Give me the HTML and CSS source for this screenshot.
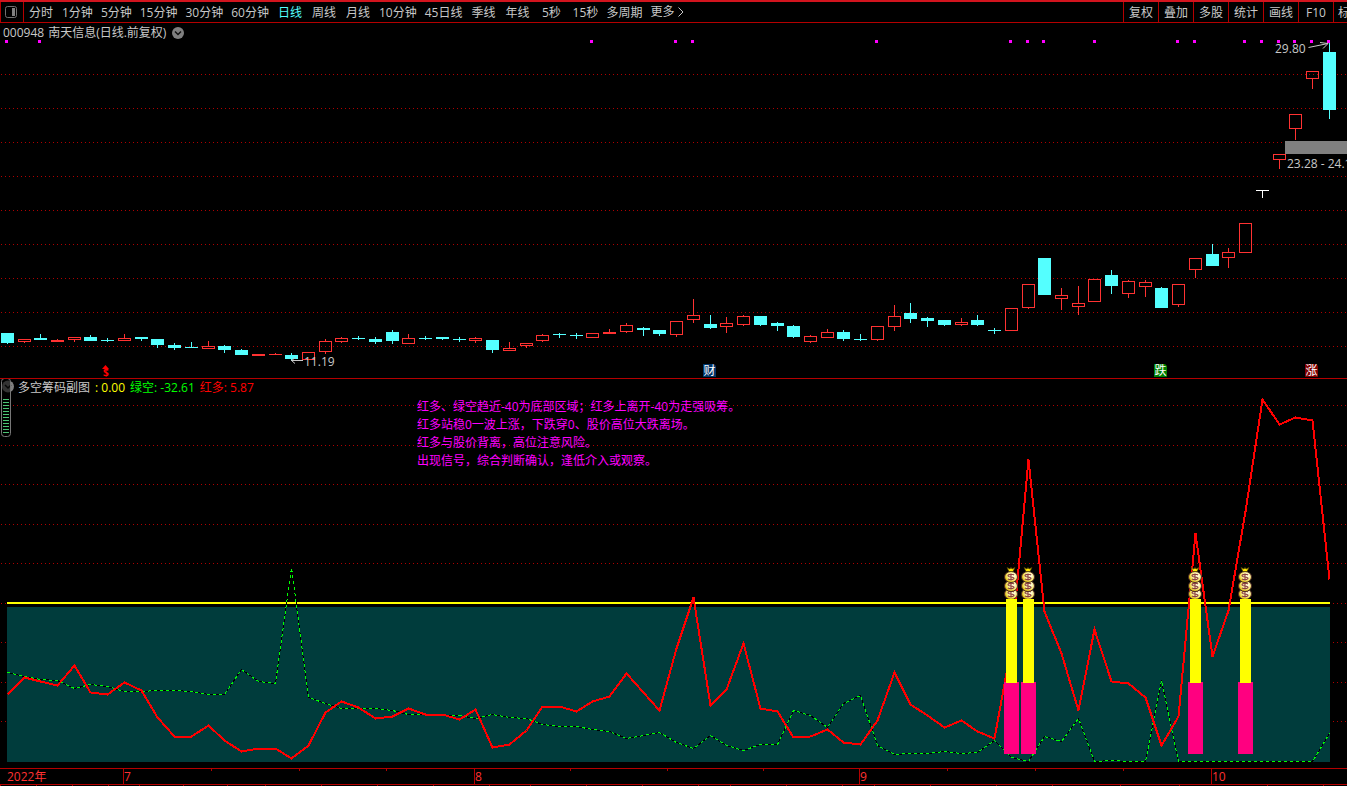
FILE: index.html
```html
<!DOCTYPE html>
<html lang="zh-CN">
<head>
<meta charset="utf-8">
<title>000948 南天信息</title>
<link rel="stylesheet" href="styles.css">
</head>
<body>
<nav class="toolbar">
  <button class="layout-btn" type="button" aria-label="布局">
    <svg width="12" height="12" viewBox="0 0 12 12"><rect class="icon-frame" x="0.5" y="0.5" width="11" height="11" rx="2"/><rect class="icon-fill" x="7" y="2" width="3" height="8"/></svg>
  </button>
  <div class="periods">
    <button type="button">分时</button><button type="button">1分钟</button><button type="button">5分钟</button><button type="button">15分钟</button><button type="button">30分钟</button><button type="button">60分钟</button><button type="button" class="active">日线</button><button type="button">周线</button><button type="button">月线</button><button type="button">10分钟</button><button type="button">45日线</button><button type="button">季线</button><button type="button">年线</button><button type="button">5秒</button><button type="button">15秒</button><button type="button">多周期</button><button type="button" class="more">更多<svg width="6" height="10" viewBox="0 0 6 10"><path class="chevron" d="M0.5 0.5L5 5L0.5 9.5"/></svg></button>
  </div>
  <div class="tools">
    <button type="button">复权</button><button type="button">叠加</button><button type="button">多股</button><button type="button">统计</button><button type="button">画线</button><button type="button">F10</button><button type="button" class="clipped">标</button>
  </div>
</nav>

<main>
  <section class="panel">
    <header class="panel-title">
      <span>000948</span>
      <span>南天信息(日线.前复权)</span>
      <svg class="drop" width="12" height="12" viewBox="0 0 12 12"><circle cx="6" cy="6" r="6" fill="#808080"/><path d="M3 4.5L6 7.5L9 4.5" fill="none" stroke="#111" stroke-width="1.5"/></svg>
    </header>
    <svg class="chart" height="355">
      <g transform="translate(0 -23)">
        <g id="price-grid" class="grid"></g>
        <g id="signals" class="signals"></g>
        <g id="candles" class="crisp"></g>
        <rect x="1285" y="141" width="100%" height="13" fill="#808080"/>
        <text class="label" x="1287" y="168">23.28 - 24.11</text>
        <text class="label" x="1275" y="53">29.80</text>
        <path class="pointer" d="M1308.500 47.500L1328 43.500M1320 42.500L1328 43.500L1323 48.500"/>
        <text class="label" x="304" y="366">11.19</text>
        <path class="pointer" d="M303 360.500H291.500M295.500 357.500L291.500 360.500L295 363.500"/>
        <path d="M105.500 365L109 369H102Z" fill="#f00"/>
        <text class="dollar" x="103" y="376">$</text>
        <g class="badge">
          <path d="M703 364H714L716 366V377H703Z" fill="#003468"/><text x="703.500" y="375">财</text>
          <path d="M1154 364H1165L1167 366V377H1154Z" fill="#008000"/><text x="1154.500" y="375">跌</text>
          <path d="M1305 364H1316L1318 366V377H1305Z" fill="#800000"/><text x="1305.500" y="375">涨</text>
        </g>
      </g>
    </svg>
  </section>

  <section class="panel">
    <header class="panel-title sub-title">
      <span class="name">多空筹码副图</span>
      <span class="yellow">: 0.00</span>
      <span class="green">绿空: -32.61</span>
      <span class="red">红多: 5.87</span>
    </header>
    <div class="notes">
      <p>红多、绿空趋近-40为底部区域；红多上离开-40为走强吸筹。</p>
      <p>红多站稳0一波上涨，下跌穿0、股价高位大跌离场。</p>
      <p>红多与股价背离，高位注意风险。</p>
      <p>出现信号，综合判断确认，逢低介入或观察。</p>
    </div>
    <svg class="chart" height="389">
      <defs>
        <radialGradient id="gold" cx="0.6" cy="0.4" r="0.6"><stop offset="0.3" stop-color="#fffbd0"/><stop offset="0.7" stop-color="#f4e468"/><stop offset="1" stop-color="#d8b800"/></radialGradient>
        <g id="coin"><ellipse rx="6.500" ry="5.500" fill="url(#gold)" stroke="#4c2828" stroke-width="1"/><path d="M3 -2C2 -3 -3 -3 -3 -1.300C-3 0.400 3 -0.400 3 1.300C3 3 -2 3 -3 1.800M0 -3.500V3.500" fill="none" stroke="#8c4040" stroke-width="1.100"/></g>
        <g id="bags"><use href="#coin" y="594"/><use href="#coin" y="586"/><use href="#coin" y="577"/><path d="M-4 567.500L-1 569L0 567.500L1 569L4 567.500L2 571.500H-2Z" fill="#ffe800" stroke="#4c3c00" stroke-width="0.700"/></g>
      </defs>
      <g transform="translate(0 -379)">
        <g id="sub-grid" class="grid"></g>
        <rect x="7" y="601" width="1323" height="6" fill="#000"/>
        <rect x="7" y="607" width="1323" height="155" fill="#003c3c"/>
        <rect x="7" y="602" width="1323" height="2" fill="#ff0"/>
        <polyline id="green-back" class="line-back"/>
        <polyline id="green-line" class="line-green"/>
        <polyline id="red-line" class="line-red"/>
        <g id="bars" class="crisp"></g>
        <circle cx="8" cy="386.500" r="6" fill="#808080"/>
        <path d="M5 385L8 388L11 385" fill="none" stroke="#111" stroke-width="1.500"/>
        <rect x="1.500" y="378.500" width="9" height="58" rx="3" fill="#000" fill-opacity="0.600" stroke="#777"/>
        <path class="crisp" d="M6 399V435" stroke="#4cc474" stroke-width="6" stroke-dasharray="1 2"/>
      </g>
    </svg>
  </section>

  <svg class="axis" height="18">
    <g transform="translate(0 -768)">
      <path class="axis-line" id="ticks"/>
      <line class="axis-line" x1="0" x2="100%" y1="768.500" y2="768.500"/>
      <line class="axis-line" x1="0" x2="100%" y1="784.500" y2="784.500"/>
      <text x="7" y="781">2022年</text>
      <text x="124" y="781">7</text>
      <text x="475" y="781">8</text>
      <text x="860" y="781">9</text>
      <text x="1212" y="781">10</text>
    </g>
  </svg>
</main>
<script src="chart.js"></script>
</body>
</html>
```
FILE: styles.css
```css
* { box-sizing: border-box; }
body {
  margin: 0;
  background: #000;
  color: #c8c8c8;
  font: 12px/18px "Open Sans", "Noto Sans CJK SC", sans-serif;
  overflow: hidden;
}
button {
  padding: 0;
  border: 0;
  background: none;
  color: inherit;
  font: inherit;
  line-height: 22px;
  white-space: nowrap;
}
.toolbar {
  display: flex;
  height: 23px;
  border-top: 2px solid #d2141e;
  border-bottom: 1px solid #b40000;
}
.layout-btn {
  display: flex;
  align-items: center;
  width: 24px;
  flex: none;
  padding-left: 4px;
  border-left: 1px solid #b40000;
  border-right: 1px solid #b40000;
}
.icon-frame { fill: none; stroke: #707070; }
.icon-fill { fill: #808080; }
.periods { display: flex; flex: 1; min-width: 0; height: 20px; overflow: hidden; }
.periods button { min-width: 34px; padding: 0 4px; flex: none; }
.periods .active { color: #54ffff; }
.periods .more { display: flex; align-items: center; gap: 4px; }
.chevron { fill: none; stroke: #c8c8c8; }
.tools { display: flex; flex: none; height: 20px; }
.tools button { width: 35px; border-left: 1px solid #b40000; }
.tools .clipped { width: 14px; padding-left: 4px; overflow: hidden; text-align: left; }

.panel { position: relative; }
.panel + .panel { border-top: 1px solid #b40000; }
.panel-title {
  position: absolute;
  top: 1px;
  left: 3px;
  display: flex;
  align-items: center;
  gap: 4px;
}
.drop { margin-left: 2px; }
.sub-title { top: 0; left: 18px; gap: 5px; }
.yellow { color: #ff0; }
.green { color: #0f0; }
.red { color: #f00; }
.notes { position: absolute; top: 19px; left: 417px; color: #f0f; }
.notes p { margin: 0; }

.chart, .axis { display: block; width: 100%; overflow: hidden; }
.crisp { shape-rendering: crispEdges; }
.grid { stroke: #b00000; stroke-dasharray: 1 3; shape-rendering: crispEdges; }
.signals { fill: #f0f; }
.label { fill: #c8c8c8; }
.pointer { fill: none; stroke: #c8c8c8; }
.dollar { fill: #f00; font-size: 10px; font-weight: 700; }
.badge text { fill: #fff; }
.up { fill: none; stroke: #ff3232; }
.down { fill: #54ffff; }
.solid { fill: #ff3232; }
.flat { fill: #fff; }
.line-back { fill: none; stroke: #000; shape-rendering: crispEdges; }
.line-green { fill: none; stroke: #0f0; stroke-dasharray: 3 3; shape-rendering: crispEdges; }
.line-red { fill: none; stroke: #f00; stroke-width: 2; shape-rendering: crispEdges; }
.axis-line { fill: none; stroke: #b40000; shape-rendering: crispEdges; }
.axis text { fill: #ff3232; }
```
FILE: chart.js
```js
const NS = "http://www.w3.org/2000/svg";
const byId = (id) => document.getElementById(id);
const xAt = (i) => Math.round(6.8 + 16.733 * i);

function add(parent, tag, attrs) {
  const el = document.createElementNS(NS, tag);
  for (const key in attrs) el.setAttribute(key, attrs[key]);
  parent.appendChild(el);
}

function grid(id, rows) {
  rows.forEach((y) => add(byId(id), "line", { x1: 1, x2: "100%", y1: y + 0.5, y2: y + 0.5 }));
}
grid("price-grid", [74, 108, 142, 176, 210, 244, 278, 312, 346]);
grid("sub-grid", [405, 445, 484, 524, 563, 603, 642, 682, 721]);

[6, 39, 591, 675, 692, 876, 1010, 1027, 1043, 1094, 1177, 1194, 1244, 1261, 1278, 1294, 1311, 1328]
  .forEach((x) => add(byId("signals"), "rect", { x: x - 1, y: 40, width: 3, height: 3 }));

// kind, body top, body bottom, high, low
const candles = `d 333 343 333 344|u 339 342 339 343|d 338 340 334 340|u 340 342 339 342|u 337 340 337 342|d 337 341 335 341|d 340 341 338 342|u 338 341 334 341|d 337 339 337 341|d 339 345 339 348
d 345 348 343 350|d 347 348 342 348|u 346 349 341 349|d 346 350 345 353|d 350 355 349 355|u 354 356 354 356|u 354 355 353 355|d 355 359 353 361|u 352 360 352 360|u 341 352 339 354
u 338 342 337 343|d 338 339 336 340|d 339 342 337 344|d 332 341 330 344|u 338 344 334 344|d 338 339 336 340|d 337 339 337 340|d 339 340 337 342|u 338 341 337 343|d 340 350 340 353
u 348 351 342 351|u 343 346 343 348|u 335 341 334 342|d 334 335 333 338|d 335 336 333 339|u 333 338 333 338|u 332 334 329 334|u 325 332 323 333|d 328 330 327 336|d 330 334 330 336
u 321 335 321 337|u 315 320 299 323|d 324 328 315 329|u 323 327 317 333|u 316 325 315 326|d 316 325 316 326|d 323 326 322 331|d 326 337 325 338|u 336 342 335 343|u 332 338 329 338
d 332 339 330 341|d 339 340 334 341|u 326 340 326 341|u 316 327 305 331|d 313 319 303 323|d 318 321 317 327|d 320 325 320 326|u 322 325 318 326|d 320 325 315 326|d 330 331 328 334
u 308 331 308 331|u 284 308 284 309|d 258 295 258 295|u 295 299 288 310|u 303 307 286 315|u 279 302 279 302|d 275 286 270 294|u 281 294 280 298|u 282 287 280 297|d 288 308 287 308
u 284 305 284 307|u 258 270 258 278|d 254 266 244 266|u 252 258 248 268|u 223 253 223 253|f 190 191 190 198|u 154 160 154 169|u 114 129 114 140|u 71 79 71 89|d 52 110 43 119`;

candles.split(/[|\n]/).forEach((row, i) => {
  const [kind, ...values] = row.split(" ");
  const [top, bottom, high, low] = values.map(Number);
  const x = xAt(i);
  const g = byId("candles");
  const fill = { d: "down", u: "solid", f: "flat" }[kind];
  if (kind === "u" && bottom - top > 2) {
    add(g, "rect", { class: "up", x: x - 5.5, y: top + 0.5, width: 12, height: bottom - top - 1 });
  } else {
    add(g, "rect", { class: fill, x: x - 6, y: top, width: 13, height: bottom - top });
  }
  if (high < top) add(g, "rect", { class: fill, x, y: high, width: 1, height: top - high });
  if (low > bottom) add(g, "rect", { class: fill, x, y: bottom, width: 1, height: low - bottom });
});

const red = [694, 677, 681, 685, 665, 692, 694, 682, 690, 717, 736, 736, 725, 740, 751, 748, 748, 758, 745, 712,
  701, 707, 718, 716, 708, 714, 714, 719, 709, 747, 744, 730, 706, 706, 711, 701, 696, 673, 692, 710,
  648, 597, 705, 689, 643, 708, 711, 737, 736, 729, 742, 744, 720, 672, 704, 715, 727, 720, 731, 738,
  645, 459, 611, 653, 710, 629, 681, 683, 697, 745, 716, 533, 656, 610, 511, 399, 424, 417, 420, 579];
const green = [672, 676, 679, 680, 688, 684, 686, 691, 691, 690, 690, 691, 694, 694, 669, 681, 683, 567, 697, 703,
  708, 708, 708, 710, 714, 714, 715, 715, 718, 714, 717, 718, 724, 726, 726, 729, 731, 738, 735, 732,
  742, 748, 735, 745, 750, 744, 744, 710, 715, 727, 703, 695, 745, 754, 753, 753, 751, 753, 752, 740,
  757, 761, 736, 741, 718, 761, 760, 761, 761, 680, 761, 761, 761, 761, 761, 761, 761, 761, 761, 733];
const points = (data) => data.map((y, i) => `${xAt(i) + 0.5},${y + 0.5}`).join(" ");
byId("red-line").setAttribute("points", points(red));
byId("green-line").setAttribute("points", points(green));
byId("green-back").setAttribute("points", points(green));

[1011, 1028, 1195, 1245].forEach((x) => {
  const g = byId("bars");
  add(g, "rect", { x: x - 7, y: 682, width: 15, height: 72, fill: "#ff0080" });
  add(g, "use", { href: "#bags", x, style: "shape-rendering:auto" });
  add(g, "rect", { x: x - 5, y: 599, width: 11, height: 84, fill: "#ff0" });
});

const tick = (from, to) => (x) => `M${x + 0.5} ${from}V${to}`;
byId("ticks").setAttribute("d", [
  ...[123, 474, 859, 1211].map(tick(768, 784)),
  ...[211, 299, 386, 570, 667, 763, 947, 1035, 1123].map(tick(768, 771)),
  ...[0, 36, 72, 108, 139, 183, 227, 265, 321, 377, 433, 489, 530, 586, 642, 698, 730, 786, 842, 874, 930, 996, 1052, 1120, 1179, 1267, 1323].map(tick(784, 786)),
].join(""));
```
